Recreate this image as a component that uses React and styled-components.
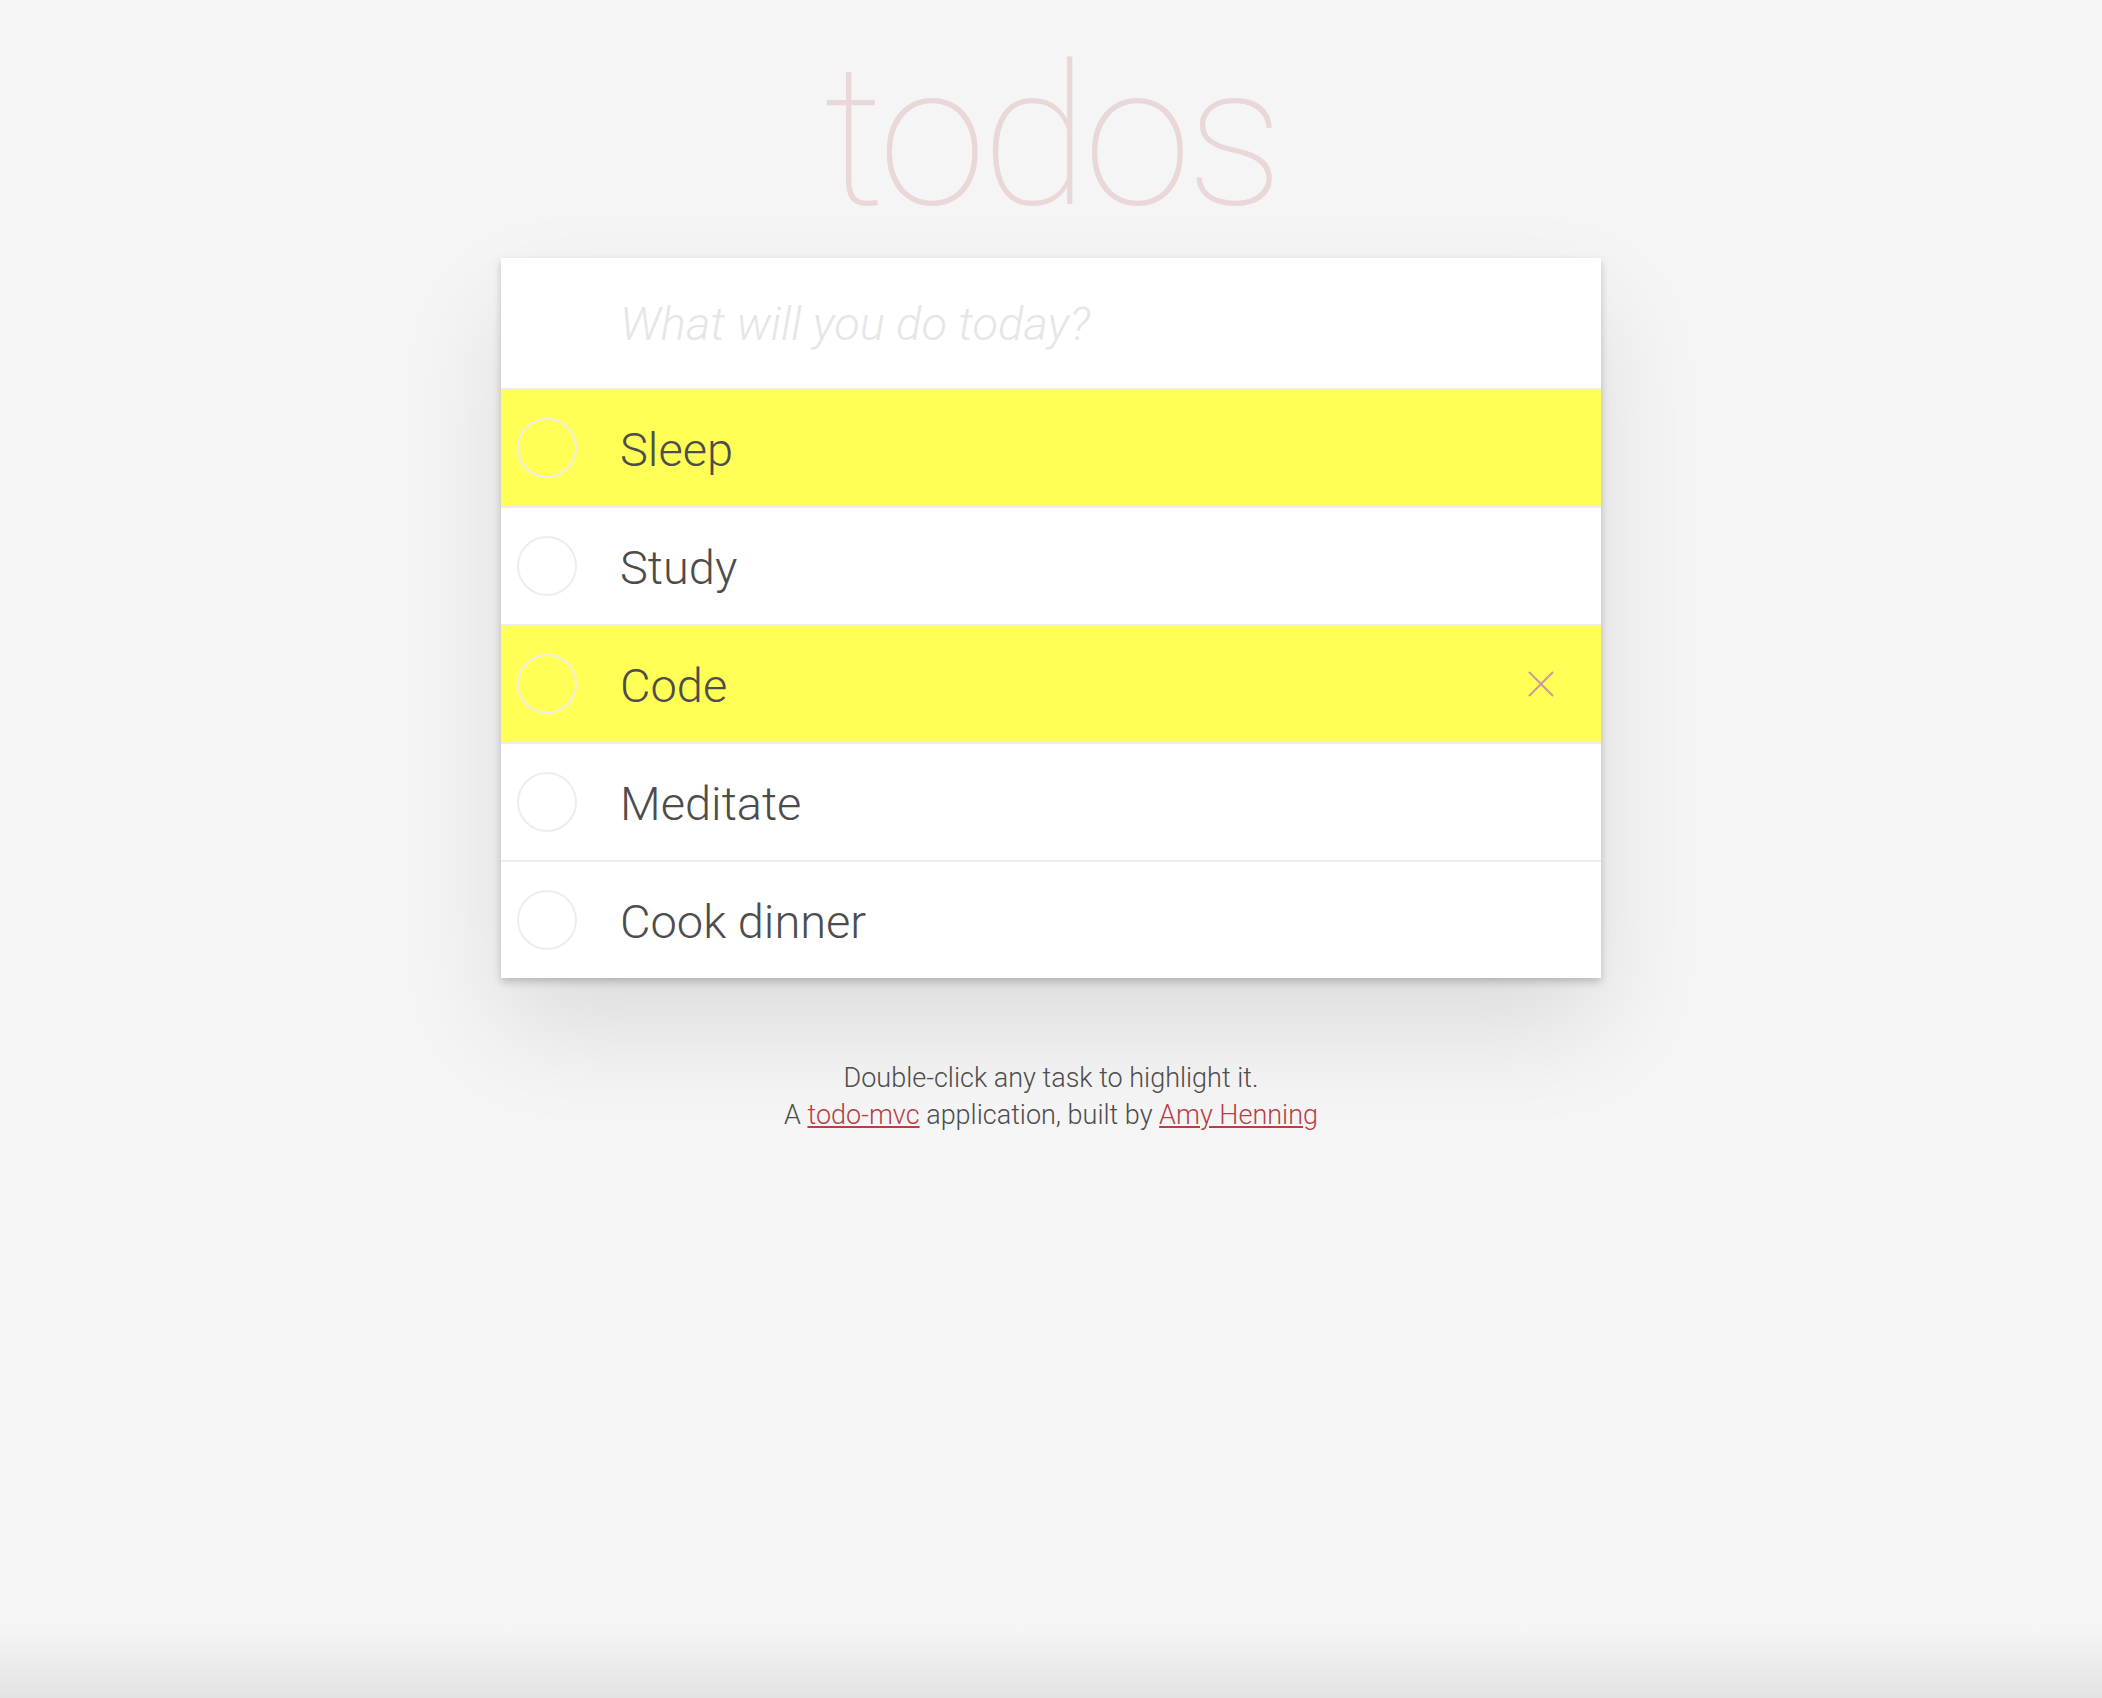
import React from 'react';
import styled, { createGlobalStyle } from 'styled-components';

const GlobalStyle = createGlobalStyle`
  html, body {
    margin: 0;
    padding: 0;
  }
  body {
    min-height: 100vh;
    background: linear-gradient(to bottom, #f5f5f5 calc(100% - 70px), #e3e3e3 100%);
    font-family: Roboto, "Liberation Sans", sans-serif;
    -webkit-font-smoothing: antialiased;
  }
`;

const todosSeed = [
  { id: 1, title: 'Sleep', highlight: true },
  { id: 2, title: 'Study', highlight: false },
  { id: 3, title: 'Code', highlight: true, hover: true },
  { id: 4, title: 'Meditate', highlight: false },
  { id: 5, title: 'Cook dinner', highlight: false },
];

export default class App extends React.Component {

  constructor(props) {
    super(props);
    this.state = {
      todos: todosSeed,
    };
    this.toggleHighlight = this.toggleHighlight.bind(this);
  }

  toggleHighlight(id) {
    this.setState(prev => ({
      todos: prev.todos.map(t => t.id === id ? { ...t, highlight: !t.highlight } : t),
    }));
  }

  render() {
    const { todos } = this.state;
    return (
      <Page>
        <GlobalStyle />
        <Title>todos</Title>

        <Card>
          <Header>
            <NewTodo placeholder="What will you do today?" />
          </Header>
          <List>
            {todos.map(todo =>
              <Row key={todo.id} $highlight={todo.highlight} onDoubleClick={() => this.toggleHighlight(todo.id)}>
                <Toggle />
                <Label>{todo.title}</Label>
                {todo.hover &&
                  <Destroy aria-label="delete">
                    <svg width="26" height="26" viewBox="0 0 26 26">
                      <path d="M1 1 L25 25 M25 1 L1 25" stroke="#cc9a9a" strokeWidth="2" fill="none" />
                    </svg>
                  </Destroy>}
              </Row>
            )}
          </List>
        </Card>

        <Info>
          <p>Double-click any task to highlight it.</p>
          <p>A <a href="#">todo-mvc</a> application, built by <a href="#">Amy Henning</a></p>
        </Info>
      </Page>
    );
  }
}

const Page = styled.div`
  display: flex;
  flex-direction: column;
  align-items: center;
  padding-top: 12px;
`;

const Title = styled.h1`
  margin: 0;
  font-family: Roboto, "Liberation Sans", sans-serif;
  font-weight: 100;
  font-size: 196px;
  line-height: 250px;
  height: 246px;
  color: #ead7d7;
  letter-spacing: -5px;
`;

const Card = styled.section`
  width: 1100px;
  background: #fff;
  box-shadow: 0 4px 8px rgba(0, 0, 0, 0.2), 0 50px 100px rgba(0, 0, 0, 0.1);
`;

const Header = styled.header`
  height: 130px;
  display: flex;
  align-items: center;
  border-bottom: 2px solid #ededed;
`;

const NewTodo = styled.input`
  width: 100%;
  border: none;
  outline: none;
  background: transparent;
  padding: 0 0 0 119px;
  font-family: Roboto, "Liberation Sans", sans-serif;
  font-weight: 300;
  font-size: 47px;
  color: #4d4d4d;

  &::placeholder {
    font-style: italic;
    font-weight: 300;
    color: #e6e6e6;
  }
`;

const List = styled.ul`
  list-style: none;
  margin: 0;
  padding: 0;
`;

const Row = styled.li`
  display: flex;
  align-items: center;
  height: 116px;
  padding-left: 16px;
  padding-right: 47px;
  background: ${p => p.$highlight ? '#ffff55' : '#fff'};
  border-bottom: 2px solid #ededed;

  &:last-child {
    border-bottom: none;
  }
`;

const Toggle = styled.span`
  flex: none;
  width: 56px;
  height: 56px;
  border: 2px solid #ededed;
  border-radius: 50%;
`;

const Label = styled.label`
  flex: 1;
  padding-left: 43px;
  padding-top: 3px;
  font-family: Roboto, "Liberation Sans", sans-serif;
  font-weight: 300;
  font-size: 47px;
  color: #4d4d4d;
  line-height: 1;
`;

const Destroy = styled.button`
  display: flex;
  border: none;
  background: none;
  padding: 0;
  cursor: pointer;
`;

const Info = styled.footer`
  margin-top: 82px;
  text-align: center;
  font-family: Roboto, "Liberation Sans", sans-serif;
  font-weight: 300;
  font-size: 27px;
  line-height: 37px;
  color: #4d4d4d;

  p {
    margin: 0;
  }

  a {
    color: #b83f45;
    text-decoration: underline;
  }
`;
